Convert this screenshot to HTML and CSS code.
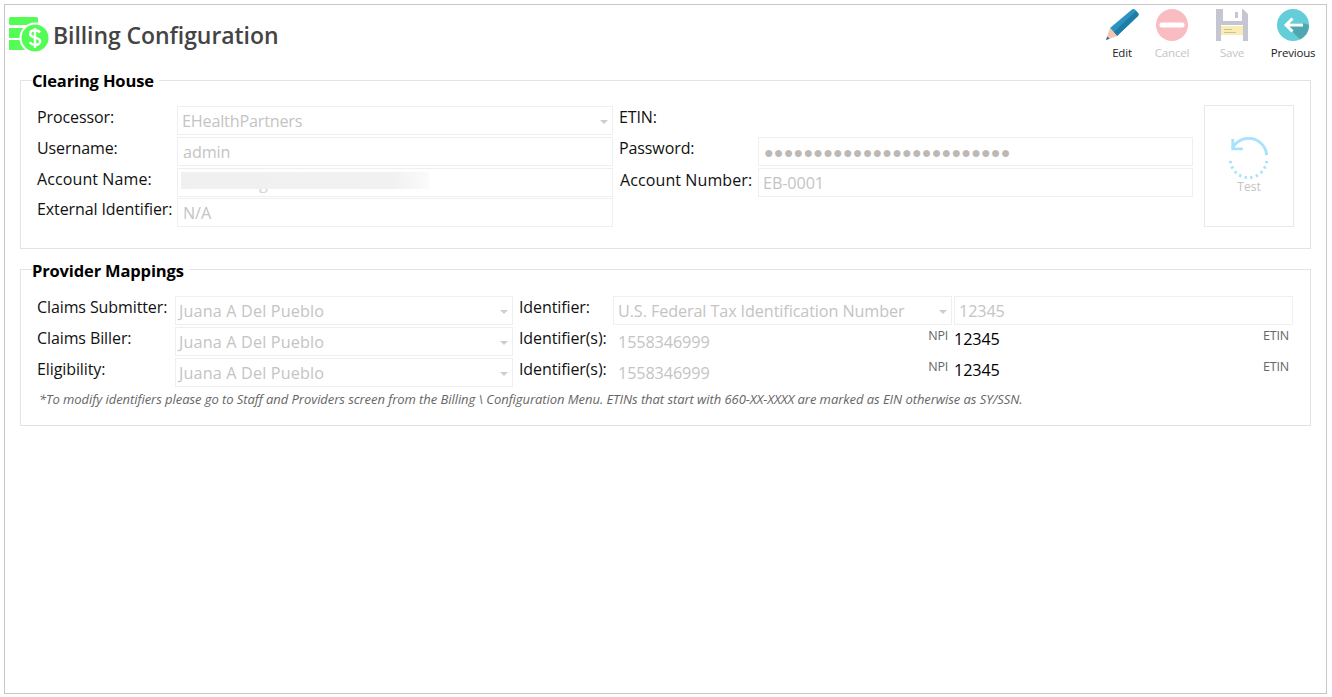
FILE: index.html
```html
<!DOCTYPE html>
<html lang="en">
<head>
<meta charset="utf-8">
<title>Billing Configuration</title>
<link rel="stylesheet" href="styles.css">
</head>
<body>
<main class="frame">
  <header class="header">
    <div class="brand">
      <svg class="logo" width="42" height="36" viewBox="0 0 42 36">
        <rect x="0" y="0" width="29" height="8" rx="1.500" fill="#55fb57"/>
        <rect x="0" y="11" width="29" height="10" fill="#55fb57"/>
        <rect x="0" y="23" width="29" height="10" fill="#55fb57"/>
        <circle cx="26" cy="21" r="15.500" fill="#fff"/>
        <circle cx="26" cy="21" r="13.500" fill="#55fb57"/>
        <path d="M31 15.500c-1-1.400-2.800-2.200-5-2.200-2.800 0-4.800 1.400-4.800 3.600 0 4.800 10 2.600 10 7.400 0 2.200-2.200 3.600-5 3.600-2.200 0-4.200-.9-5.400-2.500M26 11v20" fill="none" stroke="#fff" stroke-width="2.400"/>
      </svg>
      <h1 class="title">Billing Configuration</h1>
    </div>
    <nav class="toolbar">
      <div class="tool tool-edit">
        <svg width="34" height="34" viewBox="0 0 34 34">
          <path d="M5 20 27 1.500c1-.8 2-.8 3 0l3 3.500c.8 1 .8 2 0 3L12 28Z" fill="#2b93bf"/>
          <path d="M9 24 31 3l2 2c.8 1 .8 2 0 3L12 28Z" fill="#1f7ca6"/>
          <path d="M5 20 1 32l11-4Z" fill="#f4c4ae"/>
          <path d="M2.200 28.500 1 32l3.600-1.300Z" fill="#1f6f96"/>
        </svg>
        <span class="tool-label">Edit</span>
      </div>
      <div class="tool tool-cancel is-off">
        <svg width="34" height="34" viewBox="0 0 34 34">
          <circle cx="17" cy="17" r="16" fill="#f9bcc1"/>
          <rect x="4.500" y="14.500" width="25" height="5" rx="2" fill="#fff"/>
        </svg>
        <span class="tool-label">Cancel</span>
      </div>
      <div class="tool tool-save is-off">
        <svg width="34" height="34" viewBox="0 0 34 34">
          <path d="M1 1h27l5 5v27H1Z" fill="#c6c6d2"/>
          <rect x="8" y="1" width="19" height="12" fill="#fff"/>
          <rect x="20" y="4" width="3" height="6" fill="#c6c6d2"/>
          <rect x="6" y="17" width="22" height="16" fill="#fff"/>
          <rect x="6" y="18" width="22" height="9" fill="#faedb4"/>
          <rect x="9" y="21" width="8" height="1" fill="#c9c2a0"/>
          <rect x="9" y="24" width="12" height="1" fill="#c9c2a0"/>
        </svg>
        <span class="tool-label">Save</span>
      </div>
      <div class="tool tool-prev">
        <svg width="34" height="34" viewBox="0 0 34 34">
          <circle cx="17" cy="17" r="16" fill="#63ced7"/>
          <path d="M10 17 24 31.400A16 16 0 0 0 33 17L27 15H16Z" fill="#4fa8b0"/>
          <path d="M27 17H10M16.500 10.500 10 17l6.500 6.500" fill="none" stroke="#fff" stroke-width="3"/>
        </svg>
        <span class="tool-label tool-label-dark">Previous</span>
      </div>
    </nav>
  </header>

  <fieldset class="group">
    <legend class="legend">Clearing House</legend>
    <div class="clearing-row">
      <div class="clearing">
        <span class="label">Processor:</span>
        <div class="field select tight">EHealthPartners<i class="caret"></i></div>
        <span class="label label-r">ETIN:</span>
        <div class="blank"></div>

        <span class="label">Username:</span>
        <div class="field inset">admin</div>
        <span class="label label-r">Password:</span>
        <div class="field dots">●●●●●●●●●●●●●●●●●●●●●●●●●</div>

        <span class="label label-wide">Account Name:</span>
        <div class="field redacted"><span class="hidden-tail">g</span><i class="mask"></i></div>
        <span class="label label-r label-num label-wide">Account Number:</span>
        <div class="field">EB-0001</div>

        <span class="label">External Identifier:</span>
        <div class="field inset">N/A</div>
      </div>
      <button class="test" type="button">
        <svg width="42" height="42" viewBox="0 0 42 44">
          <path d="M3.500 12A19 19 0 0 1 39.500 19" fill="none" stroke="#a8e2fb" stroke-width="3"/>
          <path d="M4 2v10.500h10.500" fill="none" stroke="#a8e2fb" stroke-width="3"/>
          <path d="M39.500 25A19 19 0 0 1 1.500 22" fill="none" stroke="#a8e2fb" stroke-width="3" stroke-dasharray="2.500 3.500"/>
        </svg>
        <span class="test-label">Test</span>
      </button>
    </div>
  </fieldset>

  <fieldset class="group group-b">
    <legend class="legend legend-b">Provider Mappings</legend>
    <div class="mappings">
      <span class="label">Claims Submitter:</span>
      <div class="field select name">Juana A Del Pueblo<i class="caret"></i></div>
      <span class="label label-r">Identifier:</span>
      <div class="field select">U.S. Federal Tax Identification Number<i class="caret"></i></div>
      <div class="field field-last">12345</div>

      <span class="label">Claims Biller:</span>
      <div class="field select name">Juana A Del Pueblo<i class="caret"></i></div>
      <span class="label label-r">Identifier(s):</span>
      <div class="ident"><span class="muted">1558346999</span><small class="tag">NPI</small></div>
      <div class="ident ident-val"><span class="value">12345</span><small class="tag">ETIN</small></div>

      <span class="label">Eligibility:</span>
      <div class="field select name">Juana A Del Pueblo<i class="caret"></i></div>
      <span class="label label-r">Identifier(s):</span>
      <div class="ident"><span class="muted">1558346999</span><small class="tag">NPI</small></div>
      <div class="ident ident-val"><span class="value">12345</span><small class="tag">ETIN</small></div>
    </div>
    <p class="note">*To modify identifiers please go to Staff and Providers screen from the Billing \ Configuration Menu. ETINs that start with 660-XX-XXXX are marked as EIN otherwise as SY/SSN.</p>
  </fieldset>
</main>
</body>
</html>
```
FILE: styles.css
```css
* { box-sizing: border-box; }
html, body { margin: 0; height: 100%; background: #fff; }
body { font-family: "Open Sans", "Noto Sans", sans-serif; color: #111; overflow: hidden; }
.frame {
  margin: 4px 5px 0 4px;
  height: 690px;
  border: 1px solid #c8c8c8;
  padding: 0 15px;
}
.header {
  height: 60px;
  margin: 0 0 0 -11px;
  display: flex;
  justify-content: space-between;
  align-items: flex-start;
}
.brand { display: flex; align-items: flex-start; padding-top: 12px; }
.logo { display: block; }
.title {
  margin: 1px 0 0 2px;
  font-size: 23px;
  line-height: 34px;
  font-weight: 600;
  color: #444;
  letter-spacing: -.07px;
}
.toolbar { display: flex; margin-right: -14px; padding-top: 3px; }
.tool { display: flex; flex-direction: column; align-items: center; }
.tool svg { display: block; }
.tool-edit { width: 50px; }
.tool-cancel { width: 50px; }
.tool-save { width: 70px; }
.tool-prev { width: 52px; margin-right: 6px; }
.tool-label { font-size: 11.500px; line-height: 16px; margin-top: 3px; color: #222; letter-spacing: -.2px; white-space: nowrap; }
.is-off .tool-label { color: #c4c4c4; }
.group {
  margin: 2px 0 0;
  padding: 0 16px;
  min-width: 0;
  border: 1px solid #e3e3e3;
  height: 182px;
}
.group-b { height: 171px; margin-top: 6px; }
.legend {
  margin-left: -5px;
  padding: 2px 5px 0 0;
  font-size: 16.500px;
  line-height: 24px;
  font-weight: 700;
  color: #000;
  letter-spacing: -.15px;
}
.legend-b { padding-top: 4px; }
.clearing-row { display: flex; align-items: flex-start; gap: 11px; margin-top: 13px; }
.clearing {
  display: grid;
  grid-template-columns: 140px 436px 145px 435px;
  grid-template-rows: 31px 31px 30px 29px;
}
.mappings {
  display: grid;
  grid-template-columns: 138px 338px 100px 339px 341px;
  grid-auto-rows: 29px;
  row-gap: 2px;
  margin-top: 13px;
}
.label {
  font-size: 16px;
  line-height: 22px;
  color: #111;
  white-space: nowrap;
  letter-spacing: -.1px;
}
.label-wide { letter-spacing: .1px; }
.label-r { padding-left: 6px; }
.label-num { padding-top: 1px; padding-left: 7px; }
.field {
  position: relative;
  border: 1px solid #efefef;
  font-size: 16.200px;
  line-height: 29px;
  height: 29px;
  padding-left: 4px;
  color: #c4c4c4;
  white-space: nowrap;
  overflow: hidden;
  letter-spacing: -.1px;
}
.inset { padding-left: 5px; }
.field-last { margin-left: 2px; }
.tight { letter-spacing: -.2px; }
.name { letter-spacing: .15px; padding-left: 3px; }
.select { padding-right: 18px; }
.caret {
  position: absolute;
  right: 4px;
  top: 13px;
  width: 0;
  height: 0;
  border: 4px solid transparent;
  border-top-color: #cdcdcd;
  border-bottom: 0;
}
.dots { font-size: 16px; color: #bdb8b4; letter-spacing: .2px; padding-left: 5px; }
.redacted { color: #d4d4d4; padding-left: 81px; }
.mask {
  position: absolute;
  left: 3px;
  top: 3px;
  width: 248px;
  height: 17px;
  background: linear-gradient(90deg, #f0f0f0, #f1f1f1 85%, #fbfbfb);
}
.hidden-tail { display: inline-block; }
.test {
  width: 90px;
  height: 122px;
  margin-top: -1px;
  padding: 31px 0 0;
  background: #fff;
  border: 1px solid #e8e8e8;
  display: flex;
  flex-direction: column;
  align-items: center;
  font-family: inherit;
}
.test svg { display: block; }
.test-label { font-size: 12px; line-height: 16px; color: #c4c4c4; }
.ident {
  display: flex;
  justify-content: space-between;
  align-items: flex-start;
  padding: 0 4px 0 5px;
}
.muted { font-size: 16.200px; line-height: 31px; color: #c4c4c4; letter-spacing: -.1px; }
.value { font-size: 16.200px; line-height: 25px; color: #000; letter-spacing: -.1px; }
.ident-val { padding-left: 2px; }
.tag { font-size: 12.500px; line-height: 18px; color: #666; letter-spacing: -.2px; }
.note {
  margin: 4px 0 0 2px;
  font-size: 13px;
  line-height: 16px;
  font-style: italic;
  color: #666;
  white-space: nowrap;
  letter-spacing: -.06px;
}
```
